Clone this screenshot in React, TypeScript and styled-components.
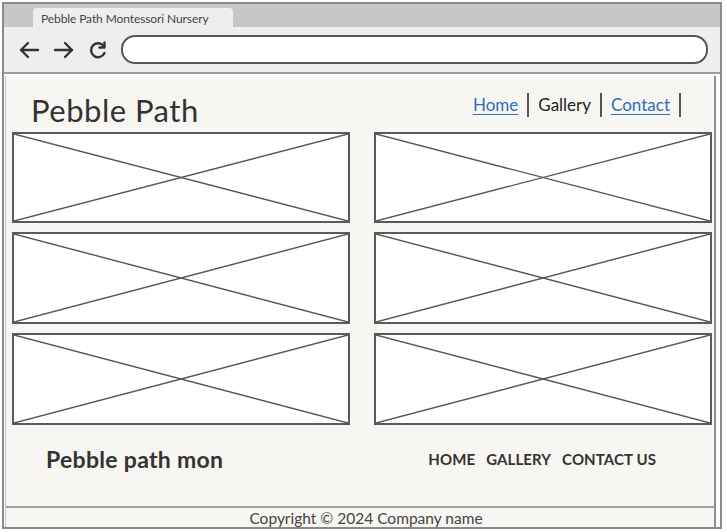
import React from "react";
import styled, { createGlobalStyle } from "styled-components";

const Global = createGlobalStyle`
  html, body { margin: 0; padding: 0; background: #ffffff; }
  body { font-family: Lato, "Open Sans", sans-serif; }
  * { box-sizing: border-box; }
`;

const Frame = styled.div`
  margin: 2px 0 0 2px;
  width: 720px;
  height: 527px;
  border: 2px solid #8a8a8a;
  display: flex;
  flex-direction: column;
  background: #ffffff;
`;

const TabStrip = styled.div`
  height: 23px;
  background: #c6c6c6;
  display: flex;
  align-items: flex-end;
  padding-left: 29px;
`;

const Tab = styled.div`
  width: 200px;
  height: 19px;
  background: #eeeeee;
  border-radius: 4px 4px 0 0;
  font-size: 12px;
  color: #444;
  padding: 3px 0 0 8px;
  letter-spacing: -0.1px;
`;

const Toolbar = styled.div`
  height: 47px;
  background: #eeeeee;
  border-bottom: 2px solid #9a9a9a;
  display: flex;
  align-items: center;
  padding: 0 12px 0 14px;
`;

const IconBtn = styled.span`
  width: 35px;
  display: flex;
  align-items: center;
  justify-content: flex-start;
  color: #333;
`;

const Url = styled.div`
  flex: 1;
  height: 29px;
  margin-left: -2px;
  border: 2px solid #555;
  border-radius: 14px;
  background: #ffffff;
`;

const Content = styled.div`
  flex: 1;
  display: flex;
  flex-direction: column;
  background: #f7f6f2;
  margin: 2px 4px 0 1px;
  border-left: 1px solid #c8c8c8;
  border-right: 2px solid #909090;
`;

const Header = styled.header`
  height: 56px;
  display: flex;
  align-items: center;
  justify-content: space-between;
  padding: 0 33px 0 25px;
`;

const Title = styled.h1`
  margin: 12px 0 0;
  font-size: 31px;
  font-weight: 400;
  color: #333;
  letter-spacing: 0.5px;
`;

const Nav = styled.nav`
  display: flex;
  align-items: center;
  margin-top: 2px;
`;

const NavLink = styled.a<{ $active?: boolean }>`
  font-size: 17px;
  color: ${(p) => (p.$active ? "#222" : "#2f6db5")};
  text-decoration: ${(p) => (p.$active ? "none" : "underline")};
  text-underline-offset: 3px;
  padding: 0 9px;
  line-height: 24px;
  border-right: 2px solid #555;
`;

const Grid = styled.div`
  display: grid;
  grid-template-columns: 338px 338px;
  grid-template-rows: 91px 92px 92px;
  column-gap: 24px;
  row-gap: 9px;
  padding: 0 0 0 6px;
`;

const Placeholder = styled.div`
  background: #ffffff;
  border: 2px solid #5a5a5a;
  position: relative;
  svg {
    position: absolute;
    inset: 0;
    width: 100%;
    height: 100%;
  }
`;

const Footer = styled.footer`
  flex: 1;
  display: flex;
  flex-direction: column;
  margin-top: 4px;
`;

const FooterMain = styled.div`
  height: 79px;
  display: flex;
  justify-content: space-between;
  align-items: flex-start;
  padding: 16px 58px 0 40px;
  border-bottom: 2px solid #a0a0a0;
`;

const FooterTitle = styled.div`
  font-size: 23px;
  font-weight: 700;
  color: #333;
  letter-spacing: 0.3px;
`;

const FooterNav = styled.div`
  display: flex;
  gap: 11px;
  margin-top: 5px;
`;

const FooterLink = styled.span`
  font-size: 15px;
  font-weight: 700;
  color: #333;
  letter-spacing: 0.1px;
`;

const Copy = styled.div`
  text-align: center;
  font-size: 15.5px;
  color: #444;
  padding: 1px 0 0 12px;
`;

const X = () => (
  <svg viewBox="0 0 100 100" preserveAspectRatio="none">
    <line x1="0" y1="0" x2="100" y2="100" stroke="#555" strokeWidth="1.4" vectorEffect="non-scaling-stroke" />
    <line x1="100" y1="0" x2="0" y2="100" stroke="#555" strokeWidth="1.4" vectorEffect="non-scaling-stroke" />
  </svg>
);

const ArrowLeft = () => (
  <svg width="22" height="18" viewBox="0 0 22 18" fill="none" stroke="#333" strokeWidth="2.4" strokeLinecap="round" strokeLinejoin="round">
    <path d="M20 9H3M10 2L3 9l7 7" />
  </svg>
);

const ArrowRight = () => (
  <svg width="22" height="18" viewBox="0 0 22 18" fill="none" stroke="#333" strokeWidth="2.4" strokeLinecap="round" strokeLinejoin="round">
    <path d="M2 9h17M12 2l7 7-7 7" />
  </svg>
);

const Reload = () => (
  <svg width="20" height="20" viewBox="0 0 20 20" fill="none" stroke="#333" strokeWidth="2.4" strokeLinecap="round" strokeLinejoin="round">
    <path d="M16 6.5A7 7 0 1 0 16.5 13" />
    <path d="M16.5 2.5v5h-5" />
  </svg>
);

export default function App() {
  return (
    <>
      <Global />
      <Frame>
        <TabStrip>
          <Tab>Pebble Path Montessori Nursery</Tab>
        </TabStrip>
        <Toolbar>
          <IconBtn><ArrowLeft /></IconBtn>
          <IconBtn><ArrowRight /></IconBtn>
          <IconBtn><Reload /></IconBtn>
          <Url />
        </Toolbar>
        <Content>
          <Header>
            <Title>Pebble Path</Title>
            <Nav>
              <NavLink>Home</NavLink>
              <NavLink $active>Gallery</NavLink>
              <NavLink>Contact</NavLink>
            </Nav>
          </Header>
          <Grid>
            {Array.from({ length: 6 }).map((_, i) => (
              <Placeholder key={i}>
                <X />
              </Placeholder>
            ))}
          </Grid>
          <Footer>
            <FooterMain>
              <FooterTitle>Pebble path mon</FooterTitle>
              <FooterNav>
                <FooterLink>HOME</FooterLink>
                <FooterLink>GALLERY</FooterLink>
                <FooterLink>CONTACT US</FooterLink>
              </FooterNav>
            </FooterMain>
            <Copy>Copyright © 2024 Company name</Copy>
          </Footer>
        </Content>
      </Frame>
    </>
  );
}
